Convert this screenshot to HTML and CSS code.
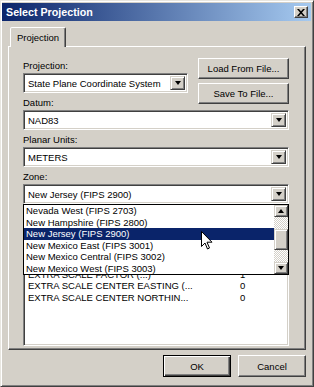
FILE: index.html
```html
<!DOCTYPE html>
<html>
<head>
<meta charset="utf-8">
<link rel="stylesheet" href="styles.css">
</head>
<body>
<div class="window">
  <div class="titlebar">
    <span class="title">Select Projection</span>
    <span class="close"><svg width="8" height="7" viewBox="0 0 8 7"><path d="M0 0h2l2 2.2 2-2.2h2l-3 3.5 3 3.5h-2l-2-2.2-2 2.2h-2l3-3.5z" fill="#000"/></svg></span>
  </div>
  <div class="body">
    <div class="tabs"><div class="tab">Projection</div></div>
    <div class="panel">
      <div class="top-row">
        <div class="left-col">
          <div class="label">Projection:</div>
          <div class="combo"><span class="combo-text">State Plane Coordinate System</span><span class="drop"><i class="tri"></i></span></div>
          <div class="label gap">Datum:</div>
        </div>
        <div class="right-col">
          <div class="btn">Load From File...</div>
          <div class="btn">Save To File...</div>
        </div>
      </div>
      <div class="combo"><span class="combo-text">NAD83</span><span class="drop"><i class="tri"></i></span></div>
      <div class="label gap">Planar Units:</div>
      <div class="combo"><span class="combo-text">METERS</span><span class="drop"><i class="tri"></i></span></div>
      <div class="label gap">Zone:</div>
      <div class="combo-wrap">
        <div class="combo"><span class="combo-text">New Jersey (FIPS 2900)</span><span class="drop"><i class="tri"></i></span></div>
        <div class="dropdown">
          <div class="items">
            <div class="item">Nevada West (FIPS 2703)</div>
            <div class="item">New Hampshire (FIPS 2800)</div>
            <div class="item sel">New Jersey (FIPS 2900)</div>
            <div class="item">New Mexico East (FIPS 3001)</div>
            <div class="item">New Mexico Central (FIPS 3002)</div>
            <div class="item">New Mexico West (FIPS 3003)</div>
          </div>
          <div class="vscroll">
            <span class="sbtn"><i class="tri up"></i></span>
            <span class="track"></span>
            <span class="thumb"></span>
            <span class="track short"></span>
            <span class="sbtn"><i class="tri"></i></span>
          </div>
          <svg class="cursor" width="12" height="19" viewBox="0 0 12 19"><path d="M0.5 0.5v15l3.5-3.5 2.5 6 2-1-2.5-5.8h5z" fill="#fff" stroke="#000" stroke-width="1"/></svg>
        </div>
      </div>
      <div class="table">
        <div class="row"></div>
        <div class="row"></div>
        <div class="row"></div>
        <div class="row"></div>
        <div class="row"></div>
        <div class="row"><span>EXTRA SCALE FACTOR (...)</span><span>1</span></div>
        <div class="row"><span>EXTRA SCALE CENTER EASTING (...</span><span>0</span></div>
        <div class="row"><span>EXTRA SCALE CENTER NORTHIN...</span><span>0</span></div>
      </div>
    </div>
    <div class="buttons">
      <div class="btn dlg default">OK</div>
      <div class="btn dlg">Cancel</div>
    </div>
  </div>
</div>
</body>
</html>
```
FILE: styles.css
```css
* { box-sizing: border-box; }
html, body { margin: 0; padding: 0; background: #d4d0c8; }
body { font-family: "Liberation Sans", Arial, sans-serif; font-size: 9.5px; color: #000; }

.window {
  width: 314px; height: 387px;
  background: #d4d0c8;
  border: 1px solid; border-color: #e8e6e0 #404040 #404040 #e8e6e0;
  box-shadow: inset 1px 1px #fff, inset -1px -1px #808080;
  padding: 2px 2px 2px 1px;
  display: flex; flex-direction: column;
}
.titlebar {
  height: 18px;
  background: linear-gradient(to right, #0a246a, #a6caf0);
  display: flex; align-items: center; justify-content: space-between;
  padding: 0 3px 0 4px;
}
.title { color: #fff; font-weight: bold; font-size: 10.7px; }
.close {
  width: 14px; height: 12px; background: #d4d0c8;
  border: 1px solid; border-color: #fff #404040 #404040 #fff;
  box-shadow: inset -1px -1px #808080;
  display: flex; align-items: center; justify-content: center;
}
.body { flex: 1; display: flex; flex-direction: column; padding: 6px 5px 0 6px; }
.tabs { display: flex; padding-left: 2px; height: 19px; position: relative; z-index: 1; }
.tab {
  width: 56px; height: 20px;
  border: 1px solid; border-bottom: none;
  border-color: #fff #404040 transparent #fff;
  box-shadow: inset -1px 0 #808080;
  border-radius: 2px 2px 0 0;
  background: #d4d0c8;
  display: flex; align-items: center; justify-content: center;
  padding-bottom: 1px;
}
.panel {
  height: 304px;
  border: 1px solid; border-color: #fff #404040 #404040 #fff;
  box-shadow: inset -1px -1px #808080;
  padding: 11px 16px 3px 14px;
  display: flex; flex-direction: column;
}
.top-row { display: flex; justify-content: space-between; height: 52px; }
.left-col { width: 165px; padding-top: 1px; }
.right-col { width: 91px; display: flex; flex-direction: column; gap: 4px; }
.label { height: 14px; line-height: 14px; }
.label.gap { margin-top: 3px; }

.combo {
  height: 20px; background: #fff;
  border: 1px solid; border-color: #808080 #fff #fff #808080;
  box-shadow: inset 1px 1px #404040, inset -1px -1px #d4d0c8;
  display: flex; align-items: center; padding: 2px;
}
.combo-text { flex: 1; padding-left: 2px; white-space: nowrap; overflow: hidden; }
.drop {
  width: 15px; height: 14px; background: #d4d0c8;
  border: 1px solid; border-color: #d4d0c8 #404040 #404040 #d4d0c8;
  box-shadow: inset 1px 1px #fff, inset -1px -1px #808080;
  display: flex; align-items: center; justify-content: center;
}
.tri { width: 0; height: 0; border-left: 3.5px solid transparent; border-right: 3.5px solid transparent; border-top: 4px solid #000; }
.tri.up { border-top: none; border-bottom: 4px solid #000; }

.btn {
  height: 21px; background: #d4d0c8;
  border: 1px solid; border-color: #fff #404040 #404040 #fff;
  box-shadow: inset -1px -1px #808080;
  display: flex; align-items: center; justify-content: center;
}
.combo-wrap { position: relative; }
.dropdown {
  position: absolute; top: 100%; left: 0; right: 0; height: 71px;
  background: #fff; border: 1px solid #000; z-index: 5;
  display: flex;
}
.items { flex: 1; }
.item { height: 11.5px; line-height: 11.5px; padding-left: 2px; white-space: nowrap; }
.item.sel { background: #0a246a; color: #fff; }
.vscroll { width: 14px; display: flex; flex-direction: column; }
.sbtn {
  height: 12px; background: #d4d0c8;
  border: 1px solid; border-color: #d4d0c8 #404040 #404040 #d4d0c8;
  box-shadow: inset 1px 1px #fff, inset -1px -1px #808080;
  display: flex; align-items: center; justify-content: center;
}
.track { height: 12px; background: repeating-conic-gradient(#d4d0c8 0 25%, #fff 0 50%) 0 0 / 2px 2px; }
.track.short { flex: 1; }
.thumb {
  height: 21px; background: #d4d0c8;
  border: 1px solid; border-color: #d4d0c8 #404040 #404040 #d4d0c8;
  box-shadow: inset 1px 1px #fff, inset -1px -1px #808080;
}
.cursor { position: absolute; left: 177px; top: 26px; }

.table {
  margin-top: 3px; flex: 1; background: #fff;
  border: 1px solid; border-color: #808080 #fff #fff #808080;
  box-shadow: inset 1px 1px #404040, inset -1px -1px #d4d0c8;
  padding: 3px 4px 2px;
}
.row { display: grid; grid-template-columns: 212px auto; height: 11.5px; line-height: 11.5px; white-space: nowrap; }

.buttons { display: flex; justify-content: flex-end; gap: 7px; margin-top: 5px; }
.btn.dlg { width: 68px; height: 22px; }
.btn.default { border: 1px solid #000; box-shadow: inset 1px 1px #fff, inset -1px -1px #404040, inset -2px -2px #808080; }
```
